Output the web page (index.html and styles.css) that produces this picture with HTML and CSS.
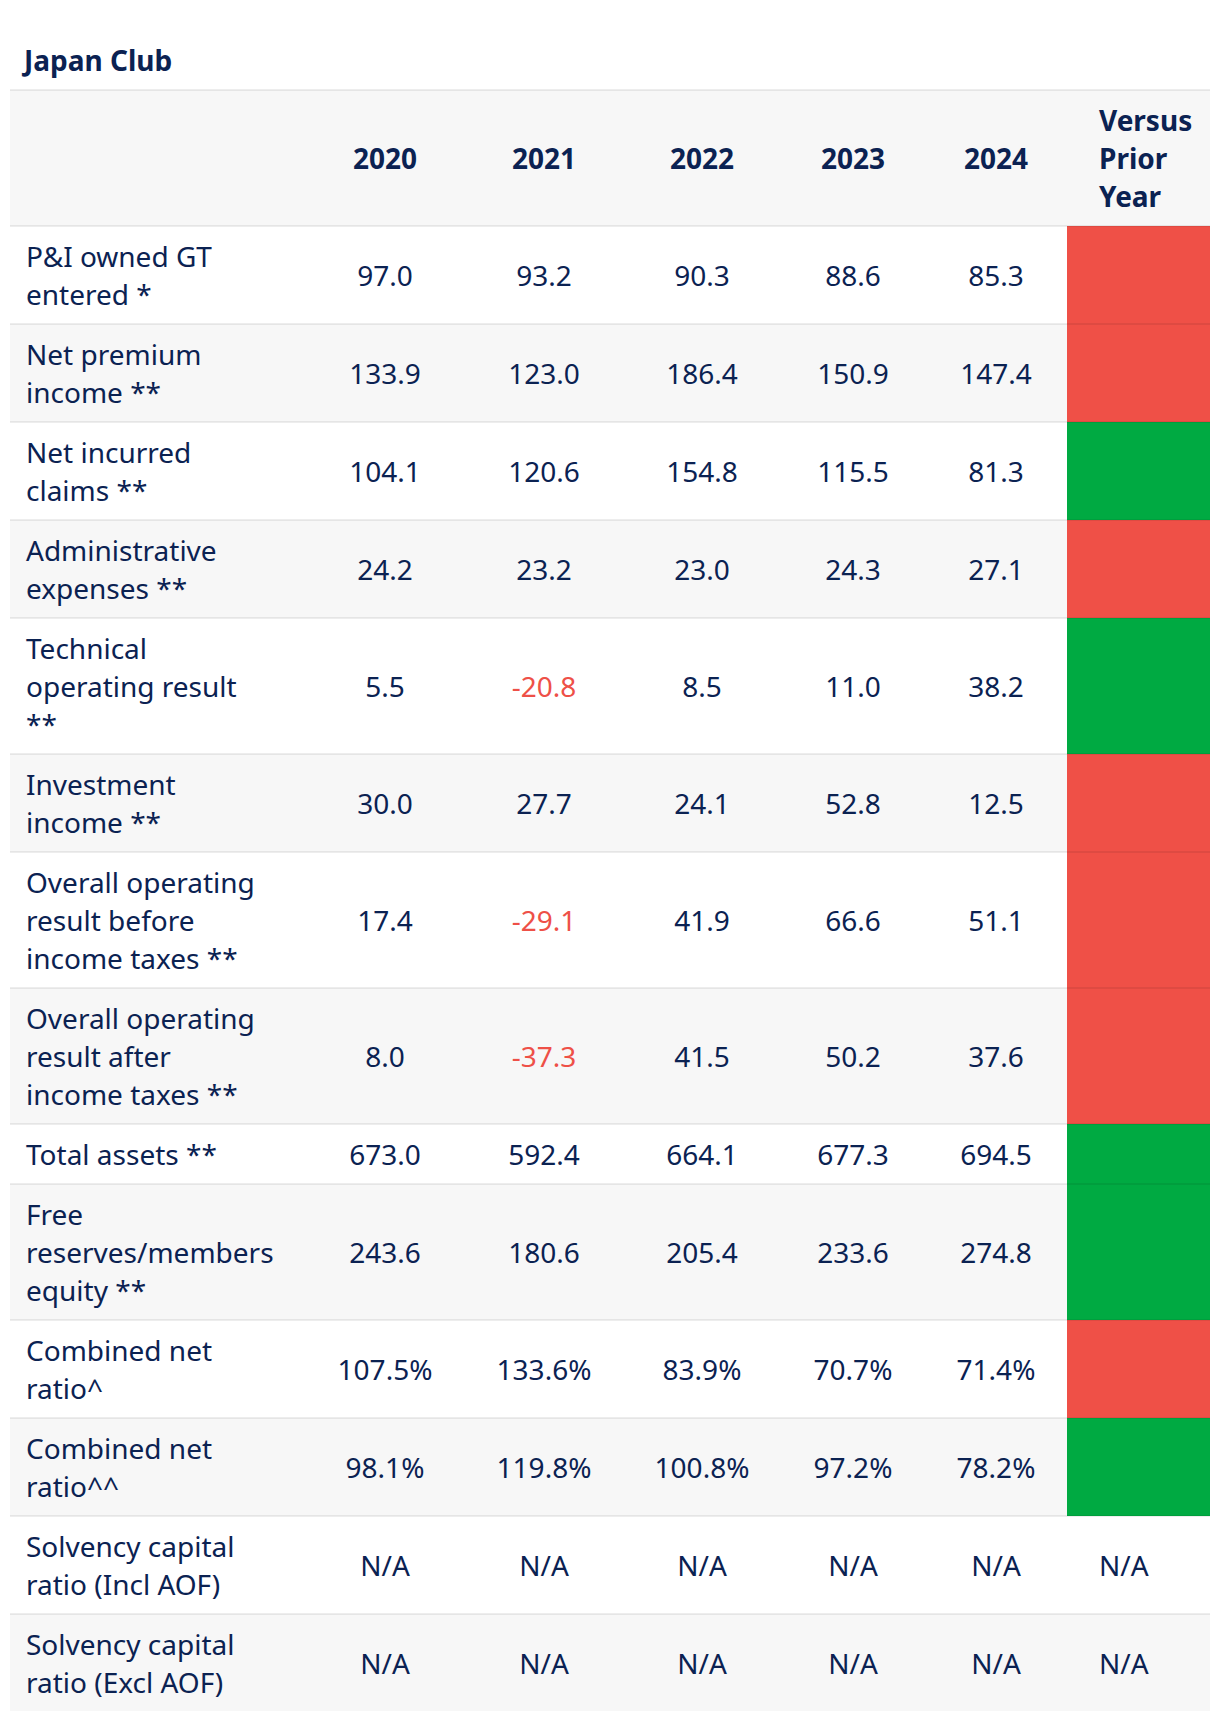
FILE: index.html
```html
<!DOCTYPE html>
<html lang="en">
<head>
<meta charset="utf-8">
<title>Japan Club</title>
<link rel="stylesheet" href="styles.css">
</head>
<body>
<div class="page">
  <h2 class="title">Japan Club</h2>
  <table class="stats">
    <colgroup>
      <col class="c-label">
      <col class="c-2020">
      <col class="c-2021">
      <col class="c-2022">
      <col class="c-2023">
      <col class="c-2024">
      <col class="c-vs">
    </colgroup>
    <thead>
      <tr>
        <th class="label"></th>
        <th>2020</th>
        <th>2021</th>
        <th>2022</th>
        <th>2023</th>
        <th>2024</th>
        <th class="vs">Versus Prior Year</th>
      </tr>
    </thead>
    <tbody>
      <tr><td class="label">P&amp;I owned GT entered *</td><td>97.0</td><td>93.2</td><td>90.3</td><td>88.6</td><td>85.3</td><td class="vs bad"></td></tr>
      <tr class="alt"><td class="label">Net premium income **</td><td>133.9</td><td>123.0</td><td>186.4</td><td>150.9</td><td>147.4</td><td class="vs bad"></td></tr>
      <tr><td class="label">Net incurred claims **</td><td>104.1</td><td>120.6</td><td>154.8</td><td>115.5</td><td>81.3</td><td class="vs good"></td></tr>
      <tr class="alt"><td class="label">Administrative expenses **</td><td>24.2</td><td>23.2</td><td>23.0</td><td>24.3</td><td>27.1</td><td class="vs bad"></td></tr>
      <tr><td class="label">Technical operating result **</td><td>5.5</td><td class="neg">-20.8</td><td>8.5</td><td>11.0</td><td>38.2</td><td class="vs good"></td></tr>
      <tr class="alt"><td class="label">Investment income **</td><td>30.0</td><td>27.7</td><td>24.1</td><td>52.8</td><td>12.5</td><td class="vs bad"></td></tr>
      <tr><td class="label">Overall operating result before income taxes **</td><td>17.4</td><td class="neg">-29.1</td><td>41.9</td><td>66.6</td><td>51.1</td><td class="vs bad"></td></tr>
      <tr class="alt"><td class="label">Overall operating result after income taxes **</td><td>8.0</td><td class="neg">-37.3</td><td>41.5</td><td>50.2</td><td>37.6</td><td class="vs bad"></td></tr>
      <tr><td class="label">Total assets **</td><td>673.0</td><td>592.4</td><td>664.1</td><td>677.3</td><td>694.5</td><td class="vs good"></td></tr>
      <tr class="alt"><td class="label">Free <span class="nowrap">reserves/members</span> equity **</td><td>243.6</td><td>180.6</td><td>205.4</td><td>233.6</td><td>274.8</td><td class="vs good"></td></tr>
      <tr><td class="label">Combined net ratio^</td><td>107.5%</td><td>133.6%</td><td>83.9%</td><td>70.7%</td><td>71.4%</td><td class="vs bad"></td></tr>
      <tr class="alt"><td class="label">Combined net ratio^^</td><td>98.1%</td><td>119.8%</td><td>100.8%</td><td>97.2%</td><td>78.2%</td><td class="vs good"></td></tr>
      <tr><td class="label">Solvency capital ratio (Incl AOF)</td><td>N/A</td><td>N/A</td><td>N/A</td><td>N/A</td><td>N/A</td><td class="vs">N/A</td></tr>
      <tr class="alt"><td class="label">Solvency capital ratio (Excl AOF)</td><td>N/A</td><td>N/A</td><td>N/A</td><td>N/A</td><td>N/A</td><td class="vs">N/A</td></tr>
    </tbody>
  </table>
</div>
</body>
</html>
```

FILE: styles.css
```css
html, body {
  margin: 0;
  padding: 0;
  background: #ffffff;
}

.page {
  padding: 41px 10px 0 10px;
  font-family: "Noto Sans", "Open Sans", sans-serif;
  color: #0b2252;
}

.title {
  margin: 0 0 10px 14px;
  font-size: 28px;
  line-height: 38px;
  font-weight: 700;
  color: #0b2252;
}

.stats {
  width: 1200px;
  border-collapse: collapse;
  table-layout: fixed;
  font-size: 28px;
  line-height: 38px;
}

.c-label { width: 295px; }
.c-2020 { width: 160px; }
.c-2021 { width: 158px; }
.c-2022 { width: 158px; }
.c-2023 { width: 144px; }
.c-2024 { width: 142px; }
.c-vs { width: 143px; }

.stats th,
.stats td {
  border-top: 2px solid rgba(0, 0, 0, 0.07);
  padding: 10px 0;
  text-align: center;
  vertical-align: middle;
  font-weight: 400;
}

.stats thead tr {
  background: #f7f7f7;
}

.stats th {
  font-weight: 700;
}

.stats tbody tr.alt {
  background: #f7f7f7;
}

.stats .label {
  text-align: left;
  padding-left: 16px;
  padding-right: 34px;
}

.nowrap {
  white-space: nowrap;
}

.stats .vs {
  text-align: left;
  padding-left: 32px;
  padding-right: 8px;
}

.stats td.neg {
  color: #ee5047;
}

.stats td.bad {
  background: #ef5047;
}

.stats td.good {
  background: #00aa42;
}
```
